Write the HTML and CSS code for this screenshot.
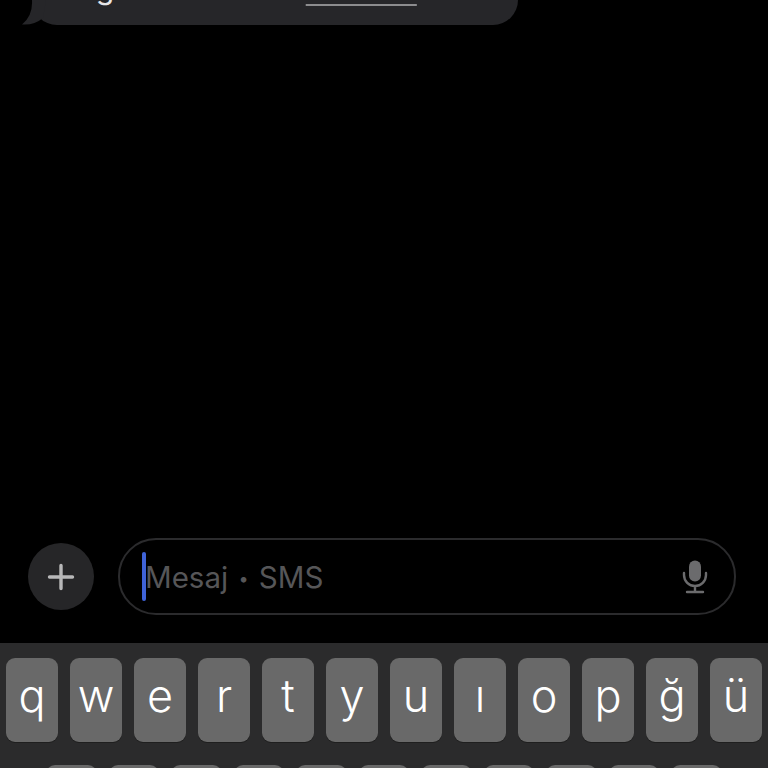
FILE: index.html
```html
<!DOCTYPE html>
<html lang="en">
<head>
  <meta charset="UTF-8">
  <title>Mesaj</title>
  <link rel="stylesheet" href="styles.css">
</head>
<body>

<div class="thread">
  <div class="bubble">
    <svg class="tail" width="24" height="25" viewBox="0 0 24 25"><path d="M10 0 Q11 16 0 24.5 Q12 25.5 21 18 L24 0 Z"/></svg>
    <p class="bubble-text">Doğrulama kodu: <span class="link">bildirimi</span> silin</p>
  </div>
</div>

<div class="composer">
  <button class="plus-btn">
    <svg width="28" height="28" viewBox="0 0 28 28"><path d="M14 2.5 V25.5 M2.5 14 H25.5" stroke="#b8b8b9" stroke-width="3.4" stroke-linecap="round"/></svg>
  </button>
  <div class="input">
    <span class="caret"></span>
    <span class="placeholder">Mesaj <span class="dot">•</span> SMS</span>
    <svg class="mic" width="26" height="34" viewBox="0 0 26 34">
      <rect x="7" y="0.5" width="12" height="21" rx="6" fill="#6b6b6d"/>
      <path d="M2 13 V15 A11 11 0 0 0 24 15 V13 M13 26 V31 M5 32 H21" fill="none" stroke="#6b6b6d" stroke-width="2.4" stroke-linecap="round"/>
    </svg>
  </div>
</div>

<div class="keyboard">
  <div class="key-row">
    <div class="key">q</div>
    <div class="key">w</div>
    <div class="key">e</div>
    <div class="key">r</div>
    <div class="key">t</div>
    <div class="key">y</div>
    <div class="key">u</div>
    <div class="key">ı</div>
    <div class="key">o</div>
    <div class="key">p</div>
    <div class="key">ğ</div>
    <div class="key">ü</div>
  </div>
  <div class="key-row second">
    <div class="key"></div>
    <div class="key"></div>
    <div class="key"></div>
    <div class="key"></div>
    <div class="key"></div>
    <div class="key"></div>
    <div class="key"></div>
    <div class="key"></div>
    <div class="key"></div>
    <div class="key"></div>
    <div class="key"></div>
  </div>
</div>

</body>
</html>
```

FILE: styles.css
```css
html, body { height: 100%; }
body {
  margin: 0; background: #000; overflow: hidden;
  display: flex; flex-direction: column;
  height: 768px;
  font-family: Inter, "Liberation Sans", sans-serif;
}

.thread { flex: 1; min-height: 0; padding-left: 32px; }
.bubble {
  position: relative; display: flow-root; width: 486px; height: 25px;
  background: #262629; border-radius: 0 0 30px 30px;
}
.tail { position: absolute; left: -10px; top: 0; fill: #262629; }
.bubble-text {
  margin: -30px 0 0 24px; color: #e6e6e8; font-size: 30px; line-height: 36px;
  white-space: nowrap;
}
.link {
  color: #e6e6e8;
  text-decoration: underline #8c8c8e 2px;
  text-underline-offset: 5px;
}

.composer {
  display: flex; align-items: center; gap: 24px;
  padding: 0 32px 28px 28px;
}
.plus-btn {
  width: 66px; height: 67px; border: none; border-radius: 50%;
  background: #262628; padding: 0;
  display: flex; align-items: center; justify-content: center;
}
.input {
  flex: 1; height: 77px; box-sizing: border-box;
  border: 2px solid #2b2b2d; border-radius: 38px;
  display: flex; align-items: center; padding: 0 26px 0 22px;
}
.caret { width: 4px; height: 49px; background: #3f63d8; border-radius: 2px; flex: none; }
.placeholder { flex: 1; color: #565658; font-size: 29.5px; margin-left: -1px; }
.dot { font-size: 18px; vertical-align: 3px; margin: 0 2px; }

.keyboard {
  background: #2b2b2c; height: 125px; box-sizing: border-box;
  padding-top: 15px; overflow: hidden;
}
.key-row { display: flex; gap: 12px; padding: 0 6px; }
.key-row.second { padding: 0 46px; margin-top: 23px; }
.key {
  flex: 1; height: 84px; background: #696969; border-radius: 9px;
  box-shadow: 0 1px 0 #1f1f1f;
  color: #fff; font-size: 45px; font-weight: 300;
  display: flex; align-items: center; justify-content: center; padding-bottom: 9px;
  box-sizing: border-box;
}
```
